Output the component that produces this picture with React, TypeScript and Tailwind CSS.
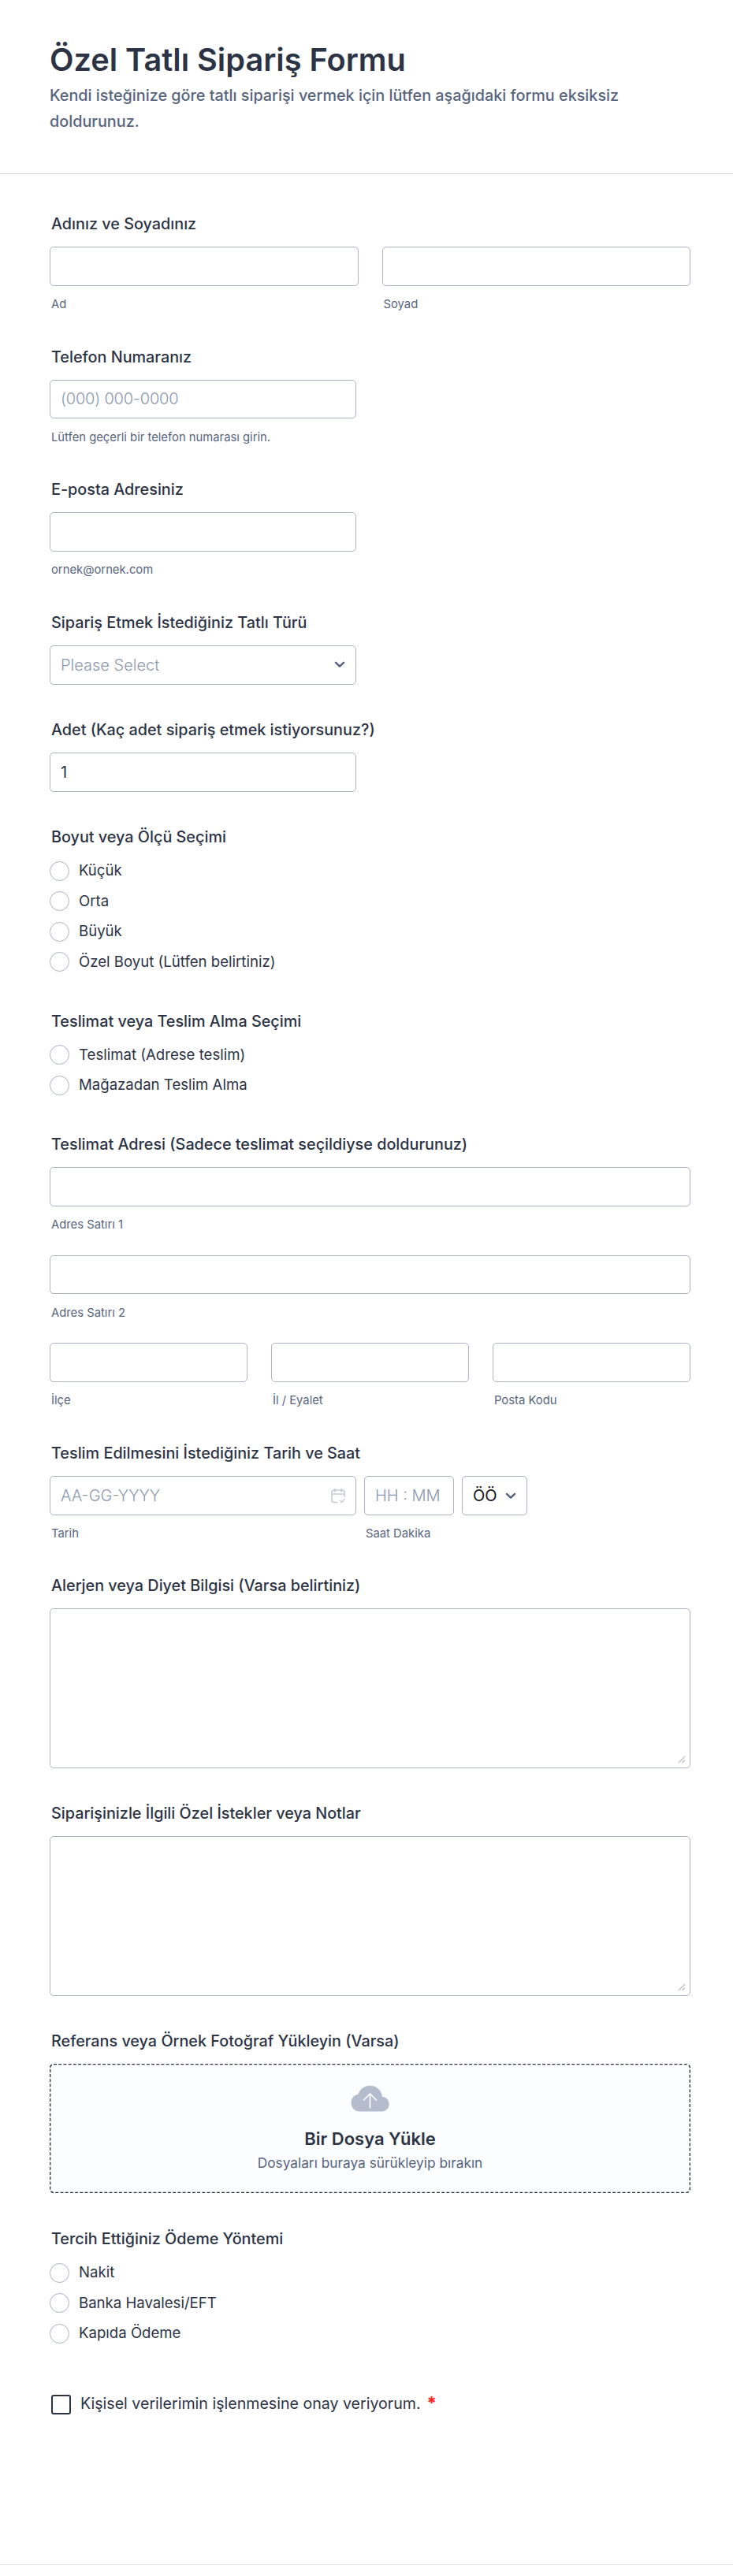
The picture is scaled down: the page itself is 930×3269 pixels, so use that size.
import type { ReactNode } from "react"

const inputClass =
    "block h-[49.5px] w-full rounded-[5px] border border-[#adb3c5] bg-white px-[13px] text-[20px] font-normal text-[#2c3345] placeholder:font-light placeholder:text-[#8b98ae] outline-none"

interface FieldProps {
    label: string
    className: string
    children: ReactNode
}

function Field({ label, className, children }: FieldProps) {
    return (
        <section className={className}>
            <h2 className="mb-[15px] pl-[2px] text-[19.8px] leading-[28px] font-medium text-[#2c3345]">{label}</h2>
            {children}
        </section>
    )
}

interface TextInputProps {
    sub?: string
    placeholder?: string
    defaultValue?: string
    className?: string
}

function TextInput({ sub, placeholder, defaultValue, className }: TextInputProps) {
    return (
        <label className={className}>
            <input type="text" placeholder={placeholder} defaultValue={defaultValue} className={inputClass} />
            {sub && <SubLabel>{sub}</SubLabel>}
        </label>
    )
}

function SubLabel({ children }: { children: ReactNode }) {
    return <span className="mt-[13.5px] block pl-[2px] text-[14.8px] leading-[20px] text-[#57647e]">{children}</span>
}

function RadioGroup({ name, options }: { name: string; options: string[] }) {
    return (
        <div className="flex flex-col gap-[13.5px] pt-[1.5px]">
            {options.map((option) => (
                <label key={option} className="flex h-[25px] items-center gap-[12px] text-[18.6px] text-[#2c3345]">
                    <input type="radio" name={name} className="size-[25px] appearance-none rounded-full border border-[#adb3c5] bg-white" />
                    {option}
                </label>
            ))}
        </div>
    )
}

function Chevron() {
    return (
        <svg width="14" height="9" viewBox="0 0 14 9" fill="none" className="shrink-0">
            <path d="M2 1.8 7 6.6l5-4.8" stroke="#5a6180" strokeWidth="2.5" strokeLinecap="round" strokeLinejoin="round" />
        </svg>
    )
}

function NotesArea() {
    return (
        <div className="relative">
            <textarea className="block h-[203px] w-full resize-none rounded-[5px] border border-[#adb3c5] bg-white outline-none" />
            <svg width="10" height="10" viewBox="0 0 10 10" className="absolute right-[6px] bottom-[6px]">
                <path d="M1 9 9 1M5.5 9 9 5.5" fill="none" stroke="#b9bcc4" strokeWidth="1.2" />
            </svg>
        </div>
    )
}

export default function App() {
    return (
        <form className="h-[3269px] w-full bg-white font-['Inter',sans-serif]">
            <header className="h-[221px] border-b border-[#ccd1de] px-[63px] pt-[52px]">
                <h1 className="text-[39.7px] leading-[48px] font-semibold text-[#2c3345]">Özel Tatlı Sipariş Formu</h1>
                <p className="mt-[5px] text-[19.8px] leading-[32.5px] font-medium text-[#57647e]">
                    Kendi isteğinize göre tatlı siparişi vermek için lütfen aşağıdaki formu eksiksiz doldurunuz.
                </p>
            </header>

            <main className="h-[3034px] border-b border-[#e3e8ef] pt-[49px] pr-[54px] pl-[63px]">
                <Field label="Adınız ve Soyadınız" className="h-[168.5px]">
                    <div className="grid grid-cols-2 gap-[30px]">
                        <TextInput sub="Ad" />
                        <TextInput sub="Soyad" />
                    </div>
                </Field>

                <Field label="Telefon Numaranız" className="h-[168.5px]">
                    <TextInput
                        placeholder="(000) 000-0000"
                        sub="Lütfen geçerli bir telefon numarası girin."
                        className="block w-[389px] [&_input]:tracking-[-0.2px]"
                    />
                </Field>

                <Field label="E-posta Adresiniz" className="h-[168.5px]">
                    <TextInput sub="ornek@ornek.com" className="block w-[389px]" />
                </Field>

                <Field label="Sipariş Etmek İstediğiniz Tatlı Türü" className="h-[136.5px]">
                    <button
                        type="button"
                        className="flex h-[50px] w-[389px] items-center justify-between rounded-[5px] border border-[#adb3c5] px-[13px] text-[20px] font-light text-[#8b98ae]"
                    >
                        Please Select
                        <Chevron />
                    </button>
                </Field>

                <Field label="Adet (Kaç adet sipariş etmek istiyorsunuz?)" className="h-[136px]">
                    <TextInput defaultValue="1" className="block w-[389px]" />
                </Field>

                <Field label="Boyut veya Ölçü Seçimi" className="h-[233.5px]">
                    <RadioGroup name="boyut" options={["Küçük", "Orta", "Büyük", "Özel Boyut (Lütfen belirtiniz)"]} />
                </Field>

                <Field label="Teslimat veya Teslim Alma Seçimi" className="h-[156.5px]">
                    <RadioGroup name="teslimat" options={["Teslimat (Adrese teslim)", "Mağazadan Teslim Alma"]} />
                </Field>

                <Field label="Teslimat Adresi (Sadece teslimat seçildiyse doldurunuz)" className="h-[392px]">
                    <div className="flex flex-col gap-[28.5px]">
                        <TextInput sub="Adres Satırı 1" />
                        <TextInput sub="Adres Satırı 2" />
                        <div className="grid grid-cols-3 gap-[30px]">
                            <TextInput sub="İlçe" />
                            <TextInput sub="İl / Eyalet" />
                            <TextInput sub="Posta Kodu" />
                        </div>
                    </div>
                </Field>

                <Field label="Teslim Edilmesini İstediğiniz Tarih ve Saat" className="h-[168px]">
                    <div className="flex gap-[10px]">
                        <div className="relative w-[389px]">
                            <TextInput placeholder="AA-GG-YYYY" sub="Tarih" />
                            <svg
                                width="20"
                                height="20"
                                viewBox="0 0 20 20"
                                fill="none"
                                stroke="#c5cad6"
                                strokeWidth="1.6"
                                strokeLinecap="round"
                                strokeLinejoin="round"
                                className="absolute top-[15px] right-[13px]"
                            >
                                <path d="M6 1.5V5M14 1.5V5M2 8h16M9 18.5H4.5A2.5 2.5 0 0 1 2 16V5.5A2.5 2.5 0 0 1 4.5 3h11A2.5 2.5 0 0 1 18 5.5V11M12.5 16.5l2 2 3.5-4" />
                            </svg>
                        </div>
                        <TextInput placeholder="HH : MM" sub="Saat Dakika" className="block w-[114px]" />
                        <button
                            type="button"
                            className="flex h-[50px] w-[83px] items-center justify-between rounded-[5px] border border-[#adb3c5] px-[13px] text-[20px] text-[#14161c]"
                        >
                            ÖÖ
                            <Chevron />
                        </button>
                    </div>
                </Field>

                <Field label="Alerjen veya Diyet Bilgisi (Varsa belirtiniz)" className="h-[289px]">
                    <NotesArea />
                </Field>

                <Field label="Siparişinizle İlgili Özel İstekler veya Notlar" className="h-[289px]">
                    <NotesArea />
                </Field>

                <Field label="Referans veya Örnek Fotoğraf Yükleyin (Varsa)" className="h-[251px]">
                    <button type="button" className="relative flex h-[164px] w-full flex-col items-center rounded-[5px] bg-[#fbfdff] pt-[27px]">
                        {/* Dashed outline of the drop zone */}
                        <svg width="813" height="164" viewBox="0 0 813 164" fill="none" className="absolute inset-0">
                            <rect x="0.6" y="0.6" width="811.8" height="162.8" rx="4.5" stroke="#2c3345" strokeWidth="1.5" strokeDasharray="3.9 2.3" />
                        </svg>
                        <svg width="49" height="34" viewBox="0 0 49 34" fill="none">
                            <path
                                d="M11.5 33.5C5 33.5.5 28.500.5 22.5c0-5.5 4-10.3 9-10.8C11.500 5 17.500.7 24.500.7c8 0 14.500 5.800 15.500 14 5 .5 8.700 4.300 8.700 9.300 0 5.500-4.200 9.500-9.200 9.500z"
                                fill="#b4bccd"
                            />
                            <path d="M24.500 28.500V11.500M16.500 19l8-8 8 8" stroke="#fff" strokeWidth="1.7" strokeLinecap="round" strokeLinejoin="round" />
                        </svg>
                        <span className="mt-[20px] text-[22px] leading-[28px] font-semibold text-[#2c3345]">Bir Dosya Yükle</span>
                        <span className="mt-[5px] text-[17.3px] leading-[24px] text-[#57647e]">Dosyaları buraya sürükleyip bırakın</span>
                    </button>
                </Field>

                <Field label="Tercih Ettiğiniz Ödeme Yöntemi" className="h-[211.5px]">
                    <RadioGroup name="odeme" options={["Nakit", "Banka Havalesi/EFT", "Kapıda Ödeme"]} />
                </Field>

                <label className="ml-[2px] flex h-[25px] items-center text-[19.6px] text-[#2c3345]">
                    <input type="checkbox" className="mr-[12px] size-[25px] appearance-none rounded-[3px] border-2 border-[#2c3345]" />
                    Kişisel verilerimin işlenmesine onay veriyorum.
                    <span className="mb-[4px] ml-[8px] text-[22px] font-bold text-[#ff2020]">*</span>
                </label>
            </main>
        </form>
    )
}
